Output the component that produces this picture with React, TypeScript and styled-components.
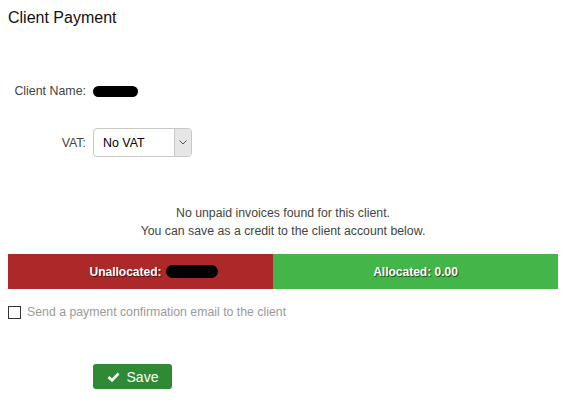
import React from 'react'
import styled, { createGlobalStyle } from 'styled-components'

const Global = createGlobalStyle`
  body {
    margin: 0;
    background: #fff;
    font-family: "Liberation Sans", Arial, sans-serif;
  }
`

const Page = styled.div`
  width: 550px;
  padding: 8px;
`

const Title = styled.h1`
  margin: 0;
  font-size: 16px;
  font-weight: normal;
  color: #111;
  line-height: 20px;
`

const FieldRow = styled.div<{ top: number }>`
  display: flex;
  align-items: center;
  gap: 7px;
  margin-top: ${p => p.top}px;
`

const Label = styled.div`
  width: 78px;
  text-align: right;
  font-size: 12.4px;
  color: #444;
`

const Redacted = styled.span<{ w: number; h: number }>`
  display: inline-block;
  width: ${p => p.w}px;
  height: ${p => p.h}px;
  background: #000;
  border-radius: ${p => p.h / 2}px;
  vertical-align: middle;
`

const Select = styled.div`
  width: 97px;
  height: 27px;
  border: 1px solid #c8c8c8;
  border-radius: 4px;
  display: flex;
  align-items: stretch;
  overflow: hidden;
  font-size: 12.4px;
  color: #000;
`

const SelectValue = styled.div`
  flex: 1;
  display: flex;
  align-items: center;
  padding-left: 9px;
`

const SelectArrow = styled.div`
  width: 16px;
  background: #e6e6e6;
  border-left: 1px solid #c8c8c8;
  display: flex;
  align-items: center;
  justify-content: center;
`

const Message = styled.div`
  margin-top: 47px;
  text-align: center;
  font-size: 12.3px;
  line-height: 18px;
  color: #444;
`

const Bar = styled.div`
  display: flex;
  height: 35px;
  margin-top: 14px;
`

const BarPart = styled.div<{ bg: string; w?: number; shift?: number }>`
  ${p => (p.w ? `width: ${p.w}px; flex: none;` : 'flex: 1;')}
  box-sizing: border-box;
  background: ${p => p.bg};
  color: #fff;
  font-size: 12px;
  font-weight: bold;
  display: flex;
  align-items: center;
  justify-content: center;
  gap: 4px;
  padding-left: ${p => p.shift ?? 0}px;
  text-shadow: 1px 1px 1px rgba(0, 0, 0, 0.6);
`

const CheckRow = styled.label`
  display: flex;
  align-items: center;
  gap: 6px;
  margin-top: 16px;
  font-size: 12.3px;
  color: #9a9a9a;
`

const Box = styled.span`
  width: 11px;
  height: 11px;
  border: 1px solid #333;
  background: #fff;
`

const SaveButton = styled.button`
  margin: 45px 0 0 85px;
  width: 79px;
  height: 25px;
  background: #2f8a35;
  border: none;
  border-radius: 3px;
  color: #fff;
  font-family: inherit;
  font-size: 14px;
  display: flex;
  align-items: center;
  justify-content: center;
  gap: 7px;
  padding: 0;
`

export default function App() {
  return (
    <Page>
      <Global />
      <Title>Client Payment</Title>
      <FieldRow top={56}>
        <Label>Client Name:</Label>
        <Redacted w={45} h={11} />
      </FieldRow>
      <FieldRow top={30}>
        <Label>VAT:</Label>
        <Select>
          <SelectValue>No VAT</SelectValue>
          <SelectArrow>
            <svg width="8" height="5" viewBox="0 0 8 5">
              <path d="M0.5 0.5 L4 4 L7.5 0.5" fill="none" stroke="#555" strokeWidth="1" />
            </svg>
          </SelectArrow>
        </Select>
      </FieldRow>
      <Message>
        No unpaid invoices found for this client.
        <br />
        You can save as a credit to the client account below.
      </Message>
      <Bar>
        <BarPart bg="#ad2828" w={265} shift={26}>
          Unallocated: <Redacted w={52} h={13} />
        </BarPart>
        <BarPart bg="#44b649">Allocated: 0.00</BarPart>
      </Bar>
      <CheckRow>
        <Box />
        Send a payment confirmation email to the client
      </CheckRow>
      <SaveButton>
        <svg width="13" height="10" viewBox="0 0 13 10">
          <path d="M1.5 5 L5 8.3 L11.5 1.5" fill="none" stroke="#fff" strokeWidth="2.6" />
        </svg>
        Save
      </SaveButton>
    </Page>
  )
}
